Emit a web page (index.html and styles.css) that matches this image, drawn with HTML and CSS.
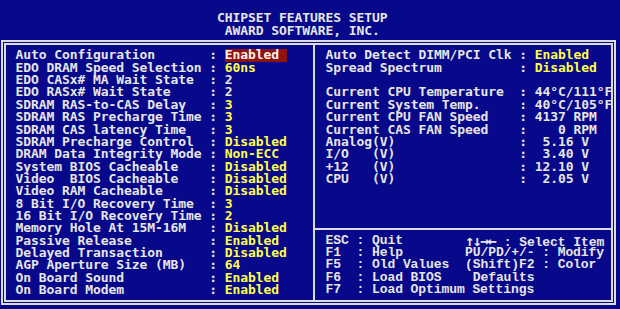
FILE: index.html
```html
<!DOCTYPE html>
<html>
  <head>
    <link rel="stylesheet" href="styles.css">
  </head>
  <body>
    <div class="screen">
      <div class="title">
        <div>CHIPSET FEATURES SETUP</div>
        <div>AWARD SOFTWARE, INC.</div>
      </div>

      <div class="frame">
        <div class="frame-inner">
          <div class="panel left">
            <div class="row"><span class="label">Auto Configuration</span><span class="colon">:</span><span class="val sel">Enabled</span></div>
            <div class="row"><span class="label">EDO DRAM Speed Selection</span><span class="colon">:</span><span class="val on">60ns</span></div>
            <div class="row"><span class="label">EDO CASx# MA Wait State</span><span class="colon">:</span><span class="val">2</span></div>
            <div class="row"><span class="label">EDO RASx# Wait State</span><span class="colon">:</span><span class="val">2</span></div>
            <div class="row"><span class="label">SDRAM RAS-to-CAS Delay</span><span class="colon">:</span><span class="val on">3</span></div>
            <div class="row"><span class="label">SDRAM RAS Precharge Time</span><span class="colon">:</span><span class="val on">3</span></div>
            <div class="row"><span class="label">SDRAM CAS latency Time</span><span class="colon">:</span><span class="val on">3</span></div>
            <div class="row"><span class="label">SDRAM Precharge Control</span><span class="colon">:</span><span class="val on">Disabled</span></div>
            <div class="row"><span class="label">DRAM Data Integrity Mode</span><span class="colon">:</span><span class="val on">Non-ECC</span></div>
            <div class="row"><span class="label">System BIOS Cacheable</span><span class="colon">:</span><span class="val on">Disabled</span></div>
            <div class="row"><span class="label">Video  BIOS Cacheable</span><span class="colon">:</span><span class="val on">Disabled</span></div>
            <div class="row"><span class="label">Video RAM Cacheable</span><span class="colon">:</span><span class="val on">Disabled</span></div>
            <div class="row"><span class="label">8 Bit I/O Recovery Time</span><span class="colon">:</span><span class="val on">3</span></div>
            <div class="row"><span class="label">16 Bit I/O Recovery Time</span><span class="colon">:</span><span class="val on">2</span></div>
            <div class="row"><span class="label">Memory Hole At 15M-16M</span><span class="colon">:</span><span class="val on">Disabled</span></div>
            <div class="row"><span class="label">Passive Release</span><span class="colon">:</span><span class="val on">Enabled</span></div>
            <div class="row"><span class="label">Delayed Transaction</span><span class="colon">:</span><span class="val on">Disabled</span></div>
            <div class="row"><span class="label">AGP Aperture Size (MB)</span><span class="colon">:</span><span class="val on">64</span></div>
            <div class="row"><span class="label">On Board Sound</span><span class="colon">:</span><span class="val on">Enabled</span></div>
            <div class="row"><span class="label">On Board Modem</span><span class="colon">:</span><span class="val on">Enabled</span></div>
          </div>

          <div class="panel right">
            <div class="settings">
              <div class="row"><span class="label">Auto Detect DIMM/PCI Clk</span><span class="colon">:</span><span class="val on">Enabled</span></div>
              <div class="row"><span class="label">Spread Spectrum</span><span class="colon">:</span><span class="val on">Disabled</span></div>
              <div class="row"></div>
              <div class="row"><span class="label">Current CPU Temperature</span><span class="colon">:</span><span class="val">44°C/111°F</span></div>
              <div class="row"><span class="label">Current System Temp.</span><span class="colon">:</span><span class="val">40°C/105°F</span></div>
              <div class="row"><span class="label">Current CPU FAN Speed</span><span class="colon">:</span><span class="val">4137 RPM</span></div>
              <div class="row"><span class="label">Current CAS FAN Speed</span><span class="colon">:</span><span class="val">   0 RPM</span></div>
              <div class="row"><span class="label">Analog(V)</span><span class="colon">:</span><span class="val"> 5.16 V</span></div>
              <div class="row"><span class="label">I/O   (V)</span><span class="colon">:</span><span class="val"> 3.40 V</span></div>
              <div class="row"><span class="label">+12   (V)</span><span class="colon">:</span><span class="val">12.10 V</span></div>
              <div class="row"><span class="label">CPU   (V)</span><span class="colon">:</span><span class="val"> 2.05 V</span></div>
            </div>

            <div class="rule"></div>

            <div class="help">
              <div class="row"><span class="key">ESC</span><span class="colon">:</span><span class="action">Quit</span><span class="hint"><span class="arrows">↑↓→←</span> : Select Item</span></div>
              <div class="row"><span class="key">F1</span><span class="colon">:</span><span class="action">Help</span><span class="hint">PU/PD/+/- : Modify</span></div>
              <div class="row"><span class="key">F5</span><span class="colon">:</span><span class="action">Old Values</span><span class="hint">(Shift)F2 : Color</span></div>
              <div class="row"><span class="key">F6</span><span class="colon">:</span><span class="action">Load BIOS</span><span class="hint"> Defaults</span></div>
              <div class="row"><span class="key">F7</span><span class="colon">:</span><span class="action">Load Optimum Settings</span></div>
            </div>
          </div>
        </div>
      </div>
    </div>
  </body>
</html>
```

FILE: styles.css
```css
html,
body {
  margin: 0;
  background: #08088a;
}
body {
  width: 620px;
  height: 309px;
  overflow: hidden;
  font-family: "DejaVu Sans Mono", "Liberation Mono", monospace;
  font-weight: bold;
  font-size: 13px;
  letter-spacing: -0.08px;
  color: #e6e6e6;
}
.screen {
  padding-top: 12.36px;
}
.title {
  padding-right: 15.5px;
  text-align: center;
}
.title div {
  height: 12.36px;
  line-height: 12.36px;
  white-space: pre;
}
.frame {
  margin: 3px 0 0 1px;
  width: 615px;
  box-sizing: border-box;
  border: 2px solid #dcdcdc;
  padding: 1px;
}
.frame-inner {
  display: flex;
  border: 2px solid #dcdcdc;
}
.panel {
  box-sizing: border-box;
  padding: 4.3px 0 3px;
}
.left {
  width: 307px;
  flex: none;
  padding-left: 9.5px;
}
.right {
  flex: 1;
  border-left: 2px solid #dcdcdc;
  padding-left: 10.5px;
}
.row {
  display: flex;
  height: 12.36px;
  line-height: 12.36px;
  white-space: pre;
}
.label {
  width: 193.75px;
  flex: none;
}
.colon {
  width: 15.5px;
  flex: none;
}
.val.on {
  color: #ffff4a;
}
.sel {
  width: 62px;
  background: #8e1414;
  color: #fff2e2;
}
.settings {
  height: 173.04px;
}
.rule {
  height: 5.18px;
  margin: 0 0 5.18px -10.5px;
  border-bottom: 2px solid #dcdcdc;
}
.help {
  font-family: "Liberation Mono", "DejaVu Sans Mono", monospace;
}
.key {
  width: 31px;
  flex: none;
}
.action {
  width: 93px;
  flex: none;
}
.arrows {
  display: inline-block;
  width: 31px;
  font-family: "DejaVu Sans Mono", monospace;
  font-size: 15px;
  letter-spacing: -1.5px;
}
```
